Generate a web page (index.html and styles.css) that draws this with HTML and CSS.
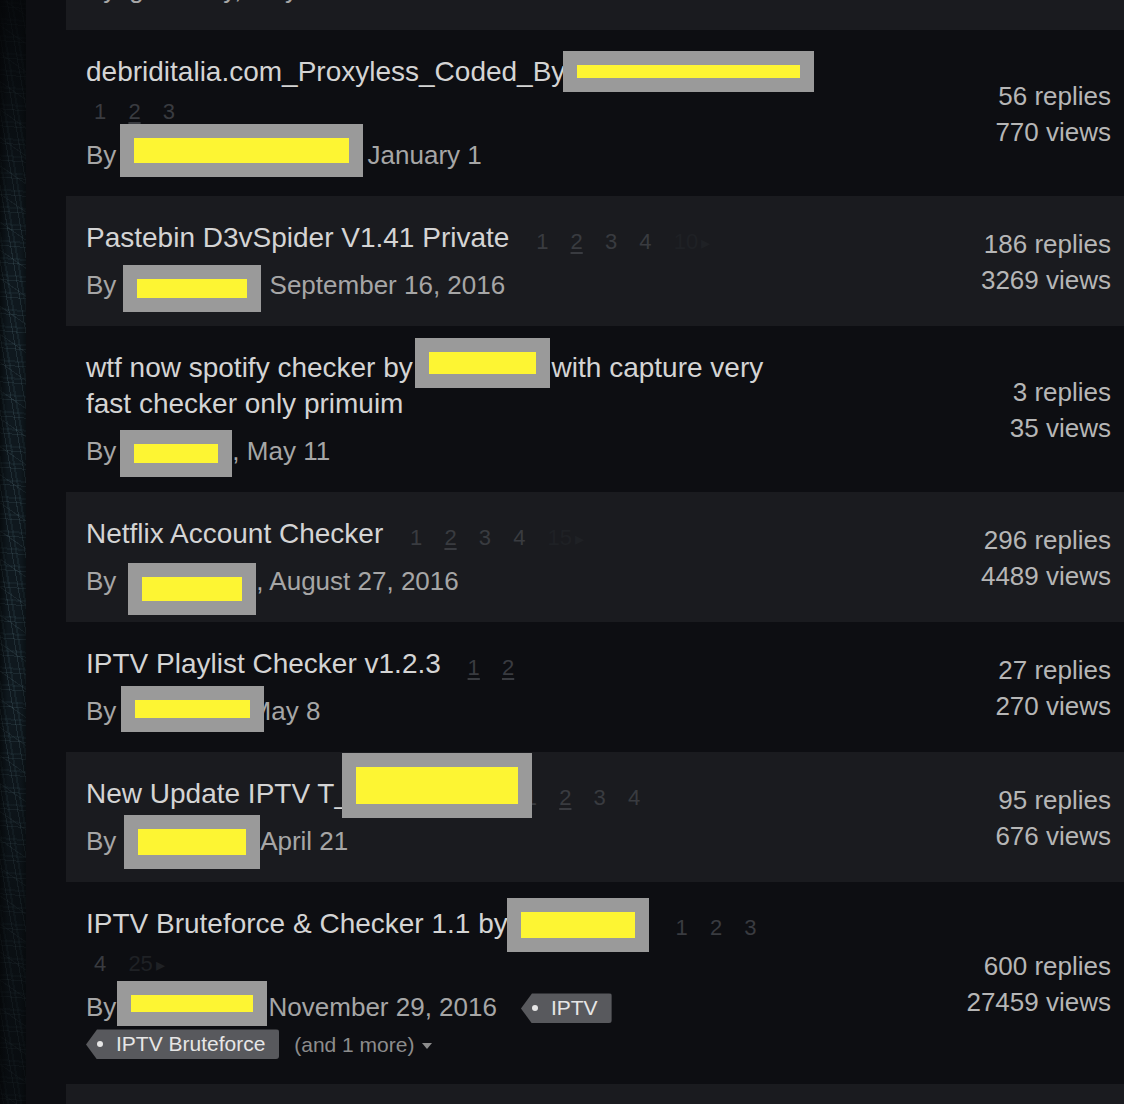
FILE: index.html
```html
<!DOCTYPE html>
<html lang="en">
<head>
<meta charset="utf-8">
<title>Topics</title>
<link rel="stylesheet" href="styles.css">
</head>
<body>
<div class="page">
  <div class="texture"></div>
  <main class="list">

    <div class="row alt">
      <div class="main">
        <h4 class="title">Spotify Account Checker</h4>
        <div class="meta">By ignorancy, May 14</div>
      </div>
      <div class="stats"><div>12 replies</div><div>240 views</div></div>
    </div>

    <div class="row">
      <div class="main">
        <h4 class="title">debriditalia.com_Proxyless_Coded_By<span class="redact" style="--w:251px;--h:41px;--ml:-2px;--mr:-40px;--dy:-2px"></span><span class="gap"> </span><span class="pages"><a>1</a> <a class="u">2</a> <a>3</a></span></h4>
        <div class="meta">By<span class="redact" style="--w:243px;--h:53px;--ml:4px;--mr:-3px;--dy:-7px"></span> January 1</div>
      </div>
      <div class="stats"><div>56 replies</div><div>770 views</div></div>
    </div>

    <div class="row alt">
      <div class="main">
        <h4 class="title">Pastebin D3vSpider V1.41 Private<span class="gap"> </span><span class="pages"><a>1</a> <a class="u">2</a> <a>3</a> <a>4</a> <a class="faint">10</a><a class="faint next">&#9656;</a></span></h4>
        <div class="meta">By<span class="redact" style="--w:138px;--h:47px;--ml:7px;--mr:1px;--dy:1px"></span> September 16, 2016</div>
      </div>
      <div class="stats"><div>186 replies</div><div>3269 views</div></div>
    </div>

    <div class="row">
      <div class="main">
        <h4 class="title">wtf now spotify checker by<span class="redact" style="--w:135px;--h:50px;--ml:2px;--mr:-6px;--dy:-7px"></span> with capture very fast checker only primuim</h4>
        <div class="meta">By<span class="redact" style="--w:112px;--h:47px;--ml:4px;--mr:0px;--dy:0px"></span>, May 11</div>
      </div>
      <div class="stats"><div>3 replies</div><div>35 views</div></div>
    </div>

    <div class="row alt">
      <div class="main">
        <h4 class="title">Netflix Account Checker<span class="gap"> </span><span class="pages"><a>1</a> <a class="u">2</a> <a>3</a> <a>4</a> <a class="faint">15</a><a class="faint next">&#9656;</a></span></h4>
        <div class="meta">By<span class="redact" style="--w:128px;--h:52px;--ml:12px;--mr:0px;--dy:6px"></span>, August 27, 2016</div>
      </div>
      <div class="stats"><div>296 replies</div><div>4489 views</div></div>
    </div>

    <div class="row">
      <div class="main">
        <h4 class="title">IPTV Playlist Checker v1.2.3<span class="gap"> </span><span class="pages"><a class="u">1</a> <a class="u">2</a></span></h4>
        <div class="meta">By<span class="redact" style="--w:143px;--h:46px;--ml:5px;--mr:-22px;--dy:-4px"></span> May 8</div>
      </div>
      <div class="stats"><div>27 replies</div><div>270 views</div></div>
    </div>

    <div class="row alt">
      <div class="main">
        <h4 class="title">New Update IPTV T_<span class="redact" style="--w:190px;--h:65px;--ml:-8px;--mr:-34px;--dy:-10px"></span><span class="gap"> </span><span class="pages"><a>1</a> <a class="u">2</a> <a>3</a> <a>4</a></span></h4>
        <div class="meta">By<span class="redact" style="--w:136px;--h:54px;--ml:8px;--mr:-6px;--dy:-1px"></span> April 21</div>
      </div>
      <div class="stats"><div>95 replies</div><div>676 views</div></div>
    </div>

    <div class="row">
      <div class="main">
        <h4 class="title">IPTV Bruteforce &amp; Checker 1.1 by<span class="redact" style="--w:142px;--h:54px;--ml:-1px;--mr:0px;--dy:-1px"></span><span class="gap"> </span><span class="pages"><a>1</a> <a>2</a> <a>3</a> <a>4</a> <a class="faint">25</a><a class="faint next">&#9656;</a></span></h4>
        <div class="meta">By<span class="redact" style="--w:150px;--h:45px;--ml:1px;--mr:-6px;--dy:-6px"></span> November 29, 2016<span class="tags"><span class="tag">IPTV</span> <span class="tag">IPTV Bruteforce</span> <span class="more">(and 1 more)<svg class="caret" width="10" height="6" viewBox="0 0 10 6"><path d="M0 0H10L5 6Z" fill="currentColor"/></svg></span></span></div>
      </div>
      <div class="stats"><div>600 replies</div><div>27459 views</div></div>
    </div>

    <div class="row alt">
      <div class="main">
        <h4 class="title">Combo List Generator</h4>
        <div class="meta">By admin, April 2</div>
      </div>
      <div class="stats"><div>14 replies</div><div>310 views</div></div>
    </div>

  </main>
</div>
</body>
</html>
```

FILE: styles.css
```css
html, body {
  margin: 0;
  padding: 0;
  background: #0d0e12;
}

body {
  font-family: "Liberation Sans", Arial, sans-serif;
  height: 1104px;
  overflow: hidden;
}

.page {
  display: flex;
  height: 1104px;
  overflow: hidden;
}

.texture {
  flex: none;
  width: 26px;
  background-color: #0f181e;
  background-image:
    linear-gradient(180deg, rgba(5,6,8,0.85) 0px, rgba(5,6,8,0.55) 120px, rgba(5,6,8,0) 260px, rgba(5,6,8,0) 720px, rgba(5,6,8,0.45) 900px, rgba(5,6,8,0.65) 1104px),
    linear-gradient(90deg, rgba(0,0,0,0.55) 0px, rgba(0,0,0,0) 8px, rgba(0,0,0,0) 20px, rgba(0,0,0,0.35) 26px),
    repeating-linear-gradient(80deg, transparent 0 3px, rgba(90,120,130,0.22) 3px 4px, transparent 4px 7px, rgba(60,90,100,0.18) 7px 9px, transparent 9px 13px),
    repeating-linear-gradient(5deg, transparent 0 5px, rgba(100,130,140,0.16) 5px 6px, transparent 6px 9px, rgba(70,100,110,0.12) 9px 11px, transparent 11px 17px),
    repeating-linear-gradient(35deg, transparent 0 9px, rgba(120,150,160,0.12) 9px 10px, transparent 10px 23px);
}

.list {
  flex: 1;
  min-width: 0;
  margin-left: 40px;
  margin-top: -100px;
}

.row {
  display: flex;
  align-items: center;
  padding: 24px 13px 23px 20px;
  background: #0d0e12;
}

.row.alt {
  background: #1a1b1f;
}

.main {
  flex: 0 1 700px;
  min-width: 0;
}

.title {
  margin: 0;
  font-size: 28px;
  line-height: 36px;
  font-weight: normal;
  color: #d4d4d4;
}

.meta {
  margin-top: 11px;
  font-size: 26px;
  line-height: 36px;
  color: #a6a6a6;
}

.stats {
  margin-left: auto;
  text-align: right;
  font-size: 26px;
  line-height: 36px;
  color: #b6b6b6;
  white-space: nowrap;
}

.gap {
  word-spacing: 11px;
}

.pages {
  font-size: 22px;
  line-height: 20px;
}

.pages a {
  display: inline-block;
  padding: 0 8px;
  line-height: 24px;
  vertical-align: -2px;
  color: #393b40;
  text-decoration: none;
}

.pages a.u {
  text-decoration: underline;
  text-underline-offset: 3px;
}

.pages a.faint {
  color: #1f2125;
}

.pages a.next {
  margin-left: -9px;
  padding: 0 4px;
  font-size: 18px;
}

.redact {
  display: inline-block;
  position: relative;
  z-index: 1;
  width: var(--w);
  height: var(--h);
  margin-top: calc((24px - var(--h)) / 2);
  margin-bottom: calc((24px - var(--h)) / 2);
  margin-left: var(--ml, 0px);
  margin-right: var(--mr, 0px);
  top: var(--dy, 0px);
  vertical-align: middle;
  background: #9a9a9a;
}

.redact::after {
  content: "";
  position: absolute;
  inset: 14px;
  background: #fdf533;
}

.tags {
  margin-left: 24px;
  font-size: 21px;
  line-height: 20px;
}

.tag {
  display: inline-block;
  position: relative;
  top: -2px;
  vertical-align: middle;
  height: 30px;
  margin: -3px 9px -3px 0;
  padding: 0 14px 0 30px;
  line-height: 30px;
  font-size: 21px;
  color: #e6e6e6;
  background: #58595d;
  border-radius: 0 3px 3px 0;
  clip-path: polygon(11px 0, 100% 0, 100% 100%, 11px 100%, 0 50%);
}

.tag::before {
  content: "";
  position: absolute;
  left: 11px;
  top: 12px;
  width: 6px;
  height: 6px;
  border-radius: 50%;
  background: #e6e6e6;
}

.more {
  color: #8c8c8c;
  font-size: 21px;
}

.caret {
  margin-left: 8px;
  vertical-align: 3px;
}
```
